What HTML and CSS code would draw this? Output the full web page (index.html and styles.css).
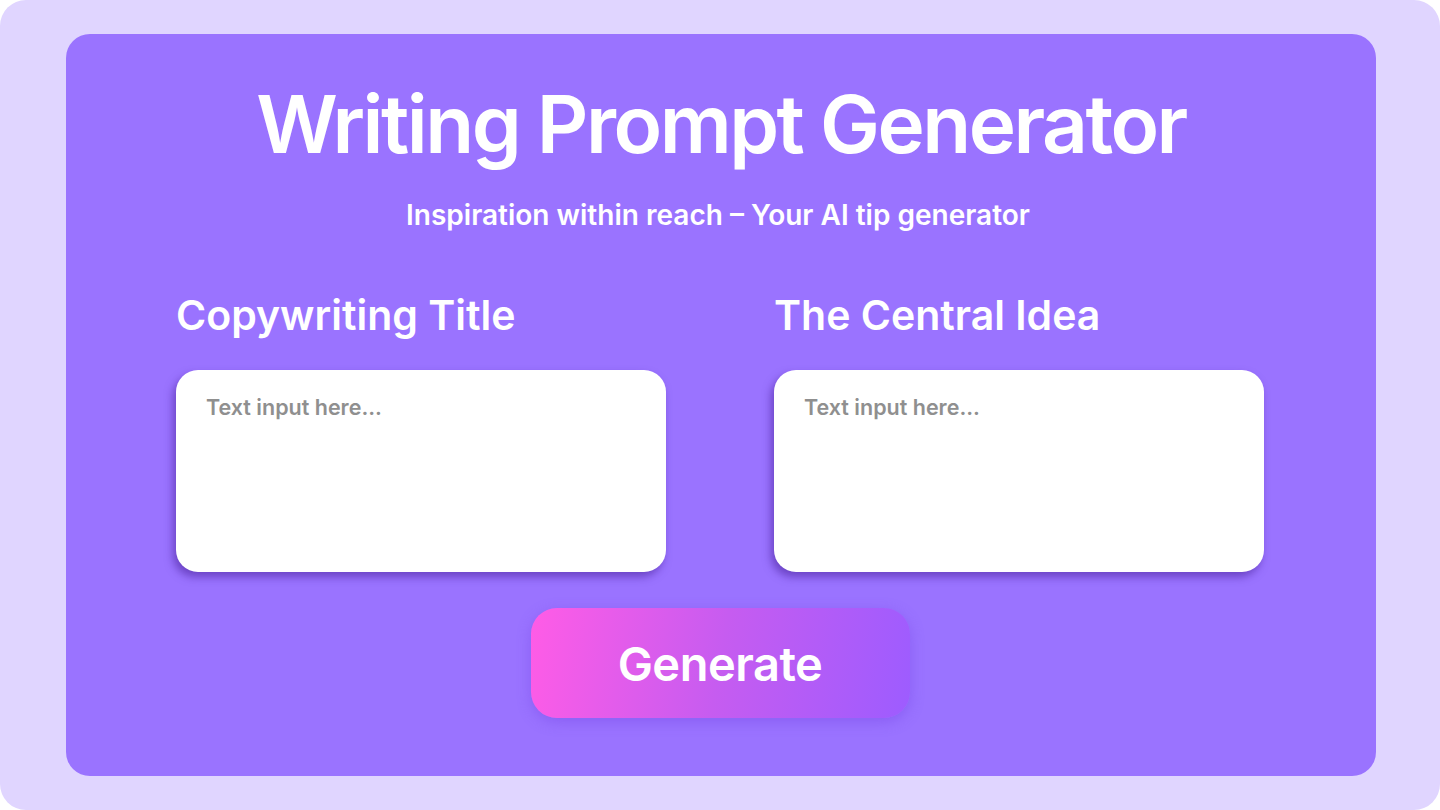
FILE: index.html
```html
<!DOCTYPE html>
<html lang="en">
<head>
    <meta charset="UTF-8">
    <meta name="viewport" content="width=device-width, initial-scale=1.0">
    <title>Writing Prompt Generator</title>
    <link rel="stylesheet" href="styles.css">
</head>
<body>
    <!-- Moldura externa -->
    <div class="moldura">
        <!-- Cartão principal -->
        <main class="cartao">
            <h1>Writing Prompt Generator</h1>
            <p class="subtitulo">Inspiration within reach – Your AI tip generator</p>

            <!-- Campos -->
            <div class="campos">
                <div class="campo">
                    <label for="titulo">Copywriting Title</label>
                    <textarea id="titulo" placeholder="Text input here..."></textarea>
                </div>
                <div class="campo">
                    <label for="ideia">The Central Idea</label>
                    <textarea id="ideia" placeholder="Text input here..."></textarea>
                </div>
            </div>

            <button type="button" class="gerar">Generate</button>
        </main>
    </div>
</body>
</html>
```

FILE: styles.css
```css
/* Estilos gerais */
body {
    margin: 0;
    padding: 0;
    background-color: #ffffff;
    font-family: Inter, "Open Sans", sans-serif;
    color: #fff;
}

/* Moldura externa */
.moldura {
    height: 810px;
    box-sizing: border-box;
    padding: 34px 64px 34px 66px;
    background-color: #e0d5ff;
    border-radius: 26px;
}

/* Cartão principal */
.cartao {
    height: 100%;
    box-sizing: border-box;
    background-color: #9a73ff;
    border-radius: 24px;
    display: flex;
    flex-direction: column;
    align-items: center;
    padding-top: 42px;
}

h1 {
    margin: 0;
    font-size: 80px;
    font-weight: 600;
    line-height: 96px;
    letter-spacing: -2.5px;
}

.subtitulo {
    margin: 26px 0 0;
    margin-right: 6px;
    font-size: 28px;
    font-weight: 600;
    line-height: 34px;
}

/* Campos de texto */
.campos {
    display: grid;
    grid-template-columns: 490px 490px;
    column-gap: 108px;
    margin-top: 59px;
    margin-right: 2px;
}

.campo {
    display: flex;
    flex-direction: column;
}

.campo label {
    font-size: 41px;
    font-weight: 600;
    line-height: 48px;
    margin-bottom: 31px;
}

.campo textarea {
    height: 202px;
    box-sizing: border-box;
    border: none;
    border-radius: 22px;
    padding: 24px 30px;
    resize: none;
    font-family: inherit;
    font-size: 21.5px;
    font-weight: 600;
    color: #333;
    background-color: #fff;
    box-shadow: -3px 5px 8px rgba(70, 30, 150, 0.55);
    outline: none;
}

.campo textarea::placeholder {
    color: #8f8f8f;
}

/* Botão */
.gerar {
    margin-top: 36px;
    margin-right: 2px;
    width: 379px;
    height: 110px;
    border: none;
    border-radius: 26px;
    background: linear-gradient(100deg, #ff5ce6 0%, #c65cf0 50%, #9d5cff 100%);
    color: #fff;
    font-family: inherit;
    font-size: 47px;
    font-weight: 600;
    letter-spacing: -0.5px;
    box-shadow: 0 4px 14px rgba(120, 70, 230, 0.45);
    cursor: pointer;
}
```
